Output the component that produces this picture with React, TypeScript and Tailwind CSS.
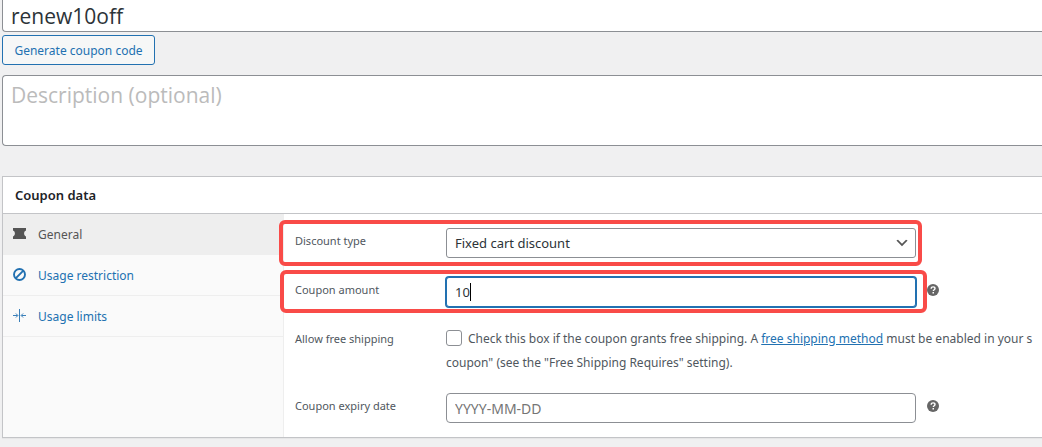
import { useState } from "react";
import type { ReactNode } from "react";

const TicketIcon = () => (
  <svg viewBox="0 0 13 11" className="h-[11px] w-[13px]" fill="currentColor" aria-hidden="true">
    <path d="M0 0h13v2.500c-1.200.4-1.900 1.600-1.900 3s.7 2.600 1.900 3V11H0V8.500c1.200-.4 1.900-1.600 1.900-3S1.200 2.900 0 2.500z" />
  </svg>
);

const BlockIcon = () => (
  <svg viewBox="0 0 13 13" className="size-[13px]" fill="none" stroke="currentColor" strokeWidth="1.9" aria-hidden="true">
    <circle cx="6.5" cy="6.5" r="5.5" />
    <path d="M2.900 10.100l7.200-7.200" />
  </svg>
);

const LimitsIcon = () => (
  <svg viewBox="0 0 13 13" className="size-[13px]" fill="none" stroke="currentColor" strokeWidth="0.9" aria-hidden="true">
    <path d="M6.500 0v13M0 6.500h4.500M13 6.500H8.500" />
    <path d="M2.900 4.500l2 2-2 2M10.100 4.500l-2 2 2 2" />
  </svg>
);

const HelpTip = ({ label }: { label: string }) => (
  <button type="button" aria-label={label} className="mt-[7px] ml-[11px] size-3 text-[#666]">
    <svg viewBox="0 0 12 12" className="size-3" aria-hidden="true">
      <circle cx="6" cy="6" r="6" fill="currentColor" />
      <path d="M4.200 4.700c0-1.200.8-1.800 1.900-1.800s1.900.6 1.900 1.600c0 1.300-1.700 1.200-1.700 2.600" fill="none" stroke="#fff" strokeWidth="1.400" />
      <rect x="5.500" y="8" width="1.500" height="1.500" fill="#fff" />
    </svg>
  </button>
);

type RowProps = {
  label: string;
  htmlFor: string;
  children: ReactNode;
};

const Row = ({ label, htmlFor, children }: RowProps) => (
  <div className="relative grid grid-cols-[151px_minmax(0,1fr)_126px] items-start pl-[11px]">
    <label htmlFor={htmlFor} className="text-[11px] leading-[26px]">
      {label}
    </label>
    {children}
  </div>
);

const tabs = [
  { id: "general", name: "General", icon: <TicketIcon /> },
  { id: "restriction", name: "Usage restriction", icon: <BlockIcon /> },
  { id: "limits", name: "Usage limits", icon: <LimitsIcon /> },
];

const App = () => {
  const [code, setCode] = useState("renew10off");
  const [amount, setAmount] = useState("10");
  const [active, setActive] = useState("general");

  return (
    <div className="min-h-screen overflow-hidden bg-[#f0f0f1] pl-0.5 font-['Noto_Sans',sans-serif] text-xs text-[#50575e]">
      <input
        aria-label="Coupon code"
        value={code}
        onChange={(e) => setCode(e.target.value)}
        className="block h-8 w-full rounded-bl border-b border-l border-[#8c8f94] bg-white px-2 font-['Open_Sans',sans-serif] text-[21px] text-[#2c3338] outline-none"
      />
      <button
        type="button"
        className="mt-[3px] block h-[30px] w-[153px] rounded-[3px] border border-[#2271b1] bg-[#f6f7f7] pt-0.5 text-xs whitespace-nowrap text-[#2271b1]"
      >
        Generate coupon code
      </button>
      <textarea
        aria-label="Description"
        placeholder="Description (optional)"
        className="mt-2.5 block h-[71px] w-full resize-none rounded-l border border-r-0 border-[#8c8f94] bg-white px-2 py-[5px] font-['Open_Sans',sans-serif] text-[21px] outline-none placeholder:text-[#bbb]"
      />

      <section className="mt-[30px] border border-r-0 border-[#c3c4c7] bg-white shadow-[0_1px_1px_rgba(0,0,0,0.04)]">
        <h2 className="h-[37px] border-b border-[#c3c4c7] px-3 text-[13px] leading-9 font-semibold text-[#1d2327]">
          Coupon data
        </h2>
        <div className="flex">
          <ul className="w-[281px] shrink-0 border-r border-[#eee] bg-[#fafafa]">
            {tabs.map((tab) => (
              <li key={tab.id} className="border-b border-[#eee]">
                <a
                  href={`#${tab.id}`}
                  onClick={() => setActive(tab.id)}
                  className={
                    tab.id === active
                      ? "flex h-10 items-center gap-3 bg-[#eee] px-2.5 pb-0.5 text-[#555]"
                      : "flex h-10 items-center gap-3 px-2.5 pb-0.5 text-[#2271b1]"
                  }
                >
                  {tab.icon}
                  <span className="pt-1">{tab.name}</span>
                </a>
              </li>
            ))}
          </ul>

          <form className="flex min-w-0 flex-1 flex-col gap-[19px] py-3.5">
            <Row label="Discount type" htmlFor="discount_type">
              <div className="relative">
                <select
                  id="discount_type"
                  className="block h-[30px] w-full appearance-none rounded-[3px] border border-[#8c8f94] bg-white px-2 pt-0.5 text-[13px] text-[#2c3338]"
                >
                  <option>Fixed cart discount</option>
                </select>
                <svg viewBox="0 0 20 20" className="pointer-events-none absolute top-[7px] right-1.5 size-4" fill="#555" aria-hidden="true">
                  <path d="M5 6l5 5 5-5 2 1-7 7-7-7 2-1z" />
                </svg>
              </div>
              <div className="pointer-events-none absolute -inset-y-2 right-[120px] -left-[5px] rounded-md border-4 border-[#f94b48]" />
            </Row>

            <Row label="Coupon amount" htmlFor="coupon_amount">
              <div className="relative">
                <input
                  id="coupon_amount"
                  value={amount}
                  onChange={(e) => setAmount(e.target.value)}
                  className="block h-[30px] w-full rounded-[3px] border border-[#2271b1] bg-white px-2 text-[13px] text-[#2c3338] ring-1 ring-[#2271b1] outline-none"
                />
                <span className="absolute top-1.5 left-6 h-[18px] w-px bg-black" />
              </div>
              <HelpTip label="Value of the coupon" />
              <div className="pointer-events-none absolute -top-[7px] right-[115px] -bottom-1.5 -left-1 rounded-md border-4 border-[#f94b48]" />
            </Row>

            <Row label="Allow free shipping" htmlFor="free_shipping">
              <div className="col-span-2 -mb-px overflow-hidden pt-px leading-6 whitespace-nowrap">
                <input
                  id="free_shipping"
                  type="checkbox"
                  className="mr-1.5 size-4 appearance-none rounded-[3px] border border-[#8c8f94] bg-white align-[-3px]"
                />
                Check this box if the coupon grants free shipping. A{" "}
                <a href="#free-shipping" className="text-[#2271b1] underline">
                  free shipping method
                </a>{" "}
                must be enabled in your s
                <br />
                coupon" (see the "Free Shipping Requires" setting).
              </div>
            </Row>

            <Row label="Coupon expiry date" htmlFor="expiry_date">
              <input
                id="expiry_date"
                placeholder="YYYY-MM-DD"
                className="block h-[30px] w-full rounded border border-[#8c8f94] bg-white px-2 text-sm text-[#2c3338] outline-none placeholder:text-[#757575]"
              />
              <HelpTip label="The coupon will expire at 00:00:00 of this date" />
            </Row>
          </form>
        </div>
      </section>
    </div>
  );
};

export default App;
